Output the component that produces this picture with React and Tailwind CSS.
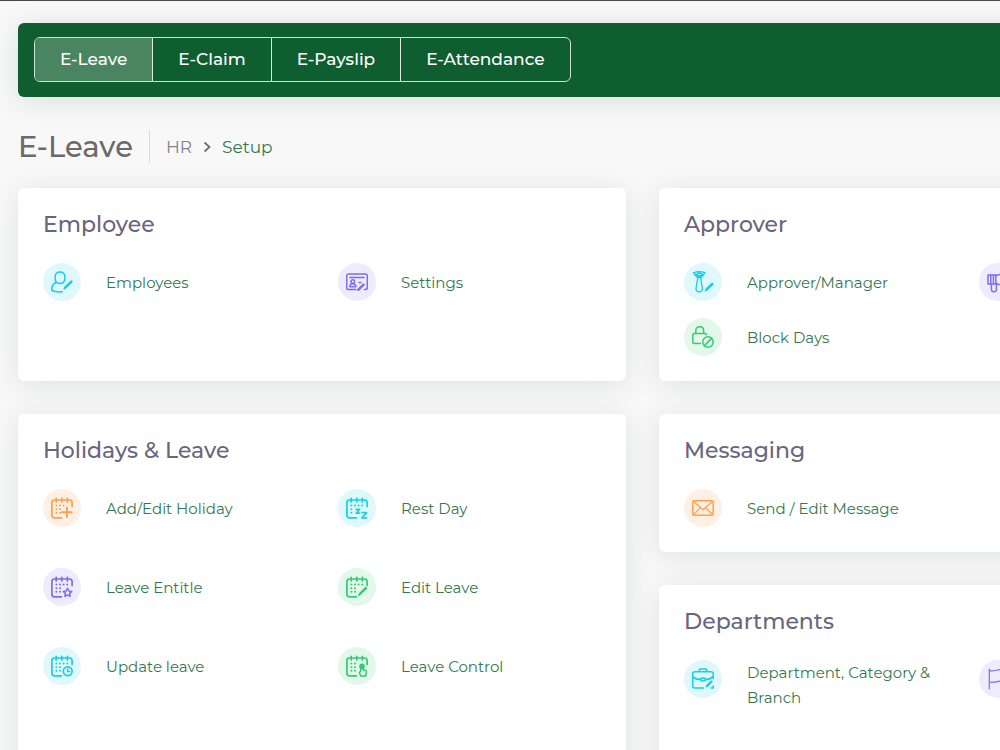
const tints = {
  cyan: 'bg-[#dff8fc] text-[#16cfe8]',
  purple: 'bg-[#eeebfd] text-[#7b6df0]',
  green: 'bg-[#e2f8ea] text-[#35c974]',
  orange: 'bg-[#fff0e3] text-[#ff9f4a]',
}

function Icon({ children }) {
  return (
    <svg
      aria-hidden="true"
      viewBox="0 0 22 22"
      className="size-[22px]"
      fill="none"
      stroke="currentColor"
      strokeWidth="1.5"
      strokeLinecap="round"
      strokeLinejoin="round"
    >
      {children}
    </svg>
  )
}

// Calendar with the lower right corner left open for a badge
function Calendar({ dots = [], children }) {
  return (
    <Icon>
      <path d="M10.4 20.8H3.6C1.9 20.8.9 19.8.9 18.2V5.6C.9 4 1.9 3 3.6 3h14.8c1.7 0 2.7 1 2.7 2.6v3.8" strokeWidth="1.7" />
      <path d="M5.2 1.3v3.6M10.8 1.3v3.6M16.4 1.3v3.6" strokeWidth="1.7" />
      {dots.map(([x, y]) => (
        <circle key={`${x}-${y}`} cx={x} cy={y} r="1" fill="currentColor" stroke="none" />
      ))}
      {children}
    </Icon>
  )
}

const topDots = [[5.4, 8.6], [9, 8.6], [12.6, 8.6], [16.2, 8.6]]
const sideDots = [[5.4, 12.2], [9, 12.2], [5.4, 15.8], [9, 15.8]]

const icons = {
  user: (
    <Icon>
      <path d="M9 .9c2.9 0 4.8 2 4.8 4.9v1.6c0 2.9-1.9 5-4.8 5s-4.8-2.1-4.8-5V5.8C4.2 2.9 6.1.9 9 .9zM5.4 11.3C2.6 12.6.8 15 .8 18.2v1.3c3 1.2 6.6 1.6 10.4 1.3" />
      <path d="M14.4 16.4l6-5.8" strokeWidth="2.6" />
      <path d="M13.2 17.8l.8-1" />
    </Icon>
  ),
  idCard: (
    <Icon>
      <path d="M10 18.6H2.6C1.4 18.6.7 17.9.7 16.7V5c0-1.2.7-1.9 1.9-1.9h16.8c1.2 0 1.9.7 1.9 1.9v11.7c0 1.2-.7 1.9-1.9 1.9h-1M4 6.5h14" />
      <circle cx="6.8" cy="10.6" r="1.8" />
      <path d="M3.8 15.7c0-1.8 1.2-3 3-3s3 1.2 3 3zM13 11.4h2" />
      <path d="M12.3 18.8l5.2-5.2" strokeWidth="2.4" />
    </Icon>
  ),
  tie: (
    <Icon>
      <path d="M1.4 1.8Q7.2-.4 13 1.8L9.4 6.4H5zM2.4 3.2l6.8 3M12 3.2l-6.8 3M4.4 3.4l2.8-1.8L10 3.4M5.8 6.6L4 17.6c-.4 4.2 6.8 4.2 6.4 0L8.6 6.6" strokeWidth="1.3" />
      <path d="M14.8 18.2l5.4-5.2" strokeWidth="2.6" />
      <path d="M13.4 19.8l1.2-1.2" />
    </Icon>
  ),
  megaphone: (
    <Icon>
      <path d="M1 4h7.8v9H1zM3.8 4v9M6.4 4v9M4.4 13v5.4c0 3 5 3 5 0V13M8.8 4.8L18.8 1v15L8.8 12.2M21 6.5v4" />
    </Icon>
  ),
  lockBlock: (
    <Icon>
      <path d="M8.6 17.5H2.4C1.4 17.5.8 16.9.8 15.9V9c0-1 .6-1.6 1.6-1.6H13c1 0 1.5.5 1.6 1.4M3.8 7.4V4.6C3.8 2.2 5.4.8 7.7.8s3.9 1.4 3.9 3.8v2.8" />
      <circle cx="16" cy="16" r="5.2" />
      <path d="M12.4 19.6l7.2-7.2" />
    </Icon>
  ),
  calendarAdd: (
    <Calendar dots={[...topDots.slice(0, 3), ...sideDots]}>
      <path d="M16 10.4v9.6M11.2 15.2h9.6" strokeWidth="1.9" />
    </Calendar>
  ),
  calendarRest: (
    <Calendar dots={[...topDots, [5.4, 12.2], [5.4, 15.8]]}>
      <path d="M10.2 12.4h3.4l-3.4 3.8h3.4M16 15.6h4.6L16 20.8h4.6" strokeWidth="1.7" />
    </Calendar>
  ),
  calendarStar: (
    <Calendar dots={[...topDots, ...sideDots]}>
      <path d="M16.5 12.4l1.3 2.6 2.9.4-2.1 2 .5 2.9-2.6-1.4-2.6 1.4.5-2.9-2.1-2 2.9-.4z" />
    </Calendar>
  ),
  calendarEdit: (
    <Calendar dots={[...topDots, ...sideDots]}>
      <path d="M14.2 17.6l5.6-5.4" strokeWidth="2.5" />
      <path d="M12.6 19.4l1.2-1.4" />
    </Calendar>
  ),
  calendarClock: (
    <Calendar dots={[...topDots, ...sideDots]}>
      <circle cx="16.7" cy="16.3" r="4.4" strokeWidth="1.7" />
      <path d="M16.7 13.9v2.6h1.9" />
    </Calendar>
  ),
  calendarHand: (
    <Calendar dots={[...topDots.slice(0, 2), ...sideDots]}>
      <circle cx="16" cy="11.4" r="2.8" fill="currentColor" stroke="none" />
      <path d="M14.7 16v-3.4c0-1.6 2.6-1.6 2.6 0v2.4l2.5.6c.5.2.7.5.6 1l-.7 4.5h-5l-1.3-3.6z" />
    </Calendar>
  ),
  mail: (
    <Icon>
      <rect x=".8" y="3.7" width="20.4" height="14.6" rx="1.2" />
      <path d="M2.2 5l8.8 7.8L19.8 5M2.2 17l6-6.2M19.8 17l-6-6.2" strokeWidth="1.2" />
    </Icon>
  ),
  briefcase: (
    <Icon>
      <path d="M11.5 19.9H2.8C1.5 19.9.8 19.2.8 17.9V5.6c0-1.2.7-1.9 2-1.9h16.4c1.3 0 2 .7 2 1.9v5M7.2 3.5V2.2c0-.8.4-1.2 1.2-1.2h5.2c.8 0 1.2.4 1.2 1.2v1.3M1 8.6c2.2 2.2 4.8 3 7.6 3M21 8.6c-2.2 2.2-4.8 3-7.6 3M21.2 18v1.9h-2" />
      <ellipse cx="11" cy="11.4" rx="2.5" ry="1.5" />
      <path d="M14.8 18.2l4.6-4.6" strokeWidth="2.4" />
    </Icon>
  ),
  flag: (
    <Icon>
      <path d="M2.3 1v20M2.3 2.6c6 1.4 10-2.8 18.2-.4l-3.6 5.6 3.6 5.4c-8-1.6-12.2 2.4-18.2.8" strokeWidth="1.2" />
    </Icon>
  ),
}

const tabs = ['E-Leave', 'E-Claim', 'E-Payslip', 'E-Attendance']

function MenuItem({ icon, tint, label }) {
  return (
    <li>
      <a
        href="#"
        aria-label={label ? undefined : icon}
        className="flex items-start gap-[25px] text-[15px] leading-[25px] text-[#33794f] hover:underline"
      >
        <span className={`flex size-[38px] shrink-0 items-center justify-center rounded-full ${tints[tint]}`}>
          {icons[icon]}
        </span>
        {label && <span className="flex min-h-[38px] items-center">{label}</span>}
      </a>
    </li>
  )
}

function Card({ title, items, rowGap = 'gap-y-[17px]', className = '' }) {
  return (
    <section className={`rounded-md bg-white p-[25px] shadow-[0_4px_28px_rgba(34,50,45,0.11)] ${className}`}>
      <h2 className="mb-[26px] text-[22px] leading-6 font-medium text-[#6a657e]">{title}</h2>
      <ul className={`grid grid-cols-2 gap-x-8 ${rowGap}`}>
        {items.map((item) => (
          <MenuItem key={item.icon} {...item} />
        ))}
      </ul>
    </section>
  )
}

export default function App() {
  return (
    <div className="h-screen overflow-hidden border-t border-[#4a484b] bg-[#f8f8f8] font-['Montserrat','Inter',sans-serif]">
      <div className="min-w-[1285px] px-[18px] pt-[22px]">
        <header className="rounded-md bg-[#0f5e30] px-4 pt-[14px] pb-[15px] shadow-[0_4px_28px_rgba(34,50,45,0.13)]">
          <nav aria-label="Modules" className="inline-flex divide-x divide-[#dfeae3] overflow-hidden rounded-md border border-[#cfdfd5] align-top">
            {tabs.map((tab, i) => (
              <button
                key={tab}
                type="button"
                aria-current={i === 0 ? 'page' : undefined}
                className={`h-[43px] px-[25px] pb-0.5 text-[17px] leading-6 font-medium text-white ${i === 0 ? 'bg-[#4a8562]' : ''}`}
              >
                {tab}
              </button>
            ))}
          </nav>
        </header>

        <div className="mt-[33px] flex items-center">
          <h1 className="border-r border-[#d6dce1] pr-4 text-[29px] leading-[33px] font-medium text-[#6a6a6a]">E-Leave</h1>
          <nav aria-label="Breadcrumb" className="pl-4">
            <ol className="flex items-center text-[17px] leading-6">
              <li className="text-[#85828f]">HR</li>
              <li className="flex items-center">
                <svg aria-hidden="true" viewBox="0 0 10 12" className="mx-[10px] h-3 w-[10px]" fill="none" stroke="#6e6b7b" strokeWidth="1.7">
                  <path d="M2.5 1.5L7.5 6l-5 4.5" />
                </svg>
                <a href="#" className="text-[#33794f]">Setup</a>
              </li>
            </ol>
          </nav>
        </div>

        <main className="mt-[25px] grid grid-cols-2 gap-[33px]">
          <Card
            title="Employee"
            items={[
              { icon: 'user', tint: 'cyan', label: 'Employees' },
              { icon: 'idCard', tint: 'purple', label: 'Settings' },
            ]}
          />
          <Card
            title="Approver"
            items={[
              { icon: 'tie', tint: 'cyan', label: 'Approver/Manager' },
              { icon: 'megaphone', tint: 'purple' },
              { icon: 'lockBlock', tint: 'green', label: 'Block Days' },
            ]}
          />
          <Card
            title="Holidays & Leave"
            className="min-h-[400px]"
            rowGap="gap-y-[41px]"
            items={[
              { icon: 'calendarAdd', tint: 'orange', label: 'Add/Edit Holiday' },
              { icon: 'calendarRest', tint: 'cyan', label: 'Rest Day' },
              { icon: 'calendarStar', tint: 'purple', label: 'Leave Entitle' },
              { icon: 'calendarEdit', tint: 'green', label: 'Edit Leave' },
              { icon: 'calendarClock', tint: 'cyan', label: 'Update leave' },
              { icon: 'calendarHand', tint: 'green', label: 'Leave Control' },
            ]}
          />
          <div className="flex flex-col gap-[33px]">
            <Card title="Messaging" items={[{ icon: 'mail', tint: 'orange', label: 'Send / Edit Message' }]} />
            <Card
              title="Departments"
              className="grow"
              items={[
                { icon: 'briefcase', tint: 'cyan', label: 'Department, Category & Branch' },
                { icon: 'flag', tint: 'purple' },
              ]}
            />
          </div>
        </main>
      </div>
    </div>
  )
}
